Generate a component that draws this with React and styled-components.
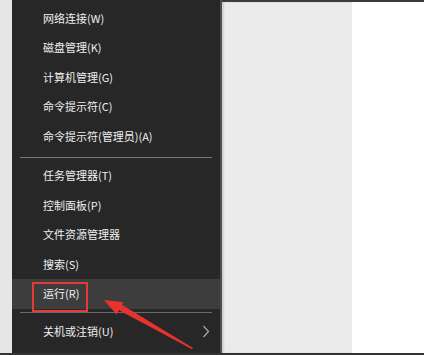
import React from "react";
import styled, { createGlobalStyle } from "styled-components";

const Global = createGlobalStyle`
  html, body {
    margin: 0;
    padding: 0;
    overflow: hidden;
    background: #ffffff;
  }
`;

const Screen = styled.div`
  position: relative;
  width: 424px;
  height: 355px;
  display: flex;
  flex-direction: column;
  font-family: "Noto Sans CJK SC", "Microsoft YaHei", sans-serif;
`;

const Body = styled.div`
  flex: 1;
  display: flex;
  min-height: 0;
`;

const BottomBar = styled.div`
  height: 2px;
  background: #333333;
`;

const LeftStrip = styled.div`
  width: 12px;
  background: #e6e6e6;
`;

const Menu = styled.div`
  width: 208px;
  background: #272727;
  border-right: 2px solid #4d4d4d;
  padding-top: 3.5px;
  box-sizing: content-box;
  display: flex;
  flex-direction: column;
`;

const Desktop = styled.div`
  flex: 1;
  display: flex;
  border-top: 2px solid #3c3c3c;
`;

const Panel = styled.div`
  width: 130px;
  background: #ebebeb;
  box-shadow: inset 2px 0 2px rgba(0, 0, 0, 0.12);
`;

const Blank = styled.div`
  flex: 1;
  background: #ffffff;
`;

const Row = styled.div`
  position: relative;
  height: ${(p) => (p.$tall ? "30px" : "29.5px")};
  display: flex;
  align-items: center;
  justify-content: space-between;
  padding: 0 10px 0 31px;
  background: ${(p) => (p.$active ? "#3d3d3d" : "transparent")};
  color: #f0f0f0;
  font-size: 11px;
`;

const Label = styled.span`
  line-height: 1;
`;

const Marker = styled.span`
  position: absolute;
  left: 20px;
  top: 3px;
  width: 52px;
  height: 26px;
  border: 2px solid #e53a35;
`;

const Separator = styled.div`
  height: 1px;
  margin: ${(p) => p.$m};
  background: ${(p) => p.$c};
`;

const Chevron = () => (
  <svg width="8" height="13" viewBox="0 0 8 13">
    <polyline points="1.5,1 6.5,6.5 1.5,12" fill="none" stroke="#a8a8a8" strokeWidth="1.2" />
  </svg>
);

const Overlay = styled.svg`
  position: absolute;
  left: 0;
  top: 0;
  pointer-events: none;
`;

const top = ["网络连接(W)", "磁盘管理(K)", "计算机管理(G)", "命令提示符(C)", "命令提示符(管理员)(A)"];
const middle = ["任务管理器(T)", "控制面板(P)", "文件资源管理器", "搜索(S)"];

export default function App() {
  return (
    <Screen>
      <Global />
      <Body>
        <LeftStrip />
        <Menu>
          {top.map((t) => (
            <Row key={t}>
              <Label>{t}</Label>
            </Row>
          ))}
          <Separator $m="5.5px 8px 3.5px 8px" $c="#7a7a7a" />
          {middle.map((t) => (
            <Row key={t}>
              <Label>{t}</Label>
            </Row>
          ))}
          <Row $active>
            <Label>运行(R)</Label>
            <Marker />
          </Row>
          <Separator $m="3px 8px 3.5px 8px" $c="#6a6a6a" />
          <Row $tall>
            <Label>关机或注销(U)</Label>
            <Chevron />
          </Row>
        </Menu>
        <Desktop>
          <Panel />
          <Blank />
        </Desktop>
      </Body>
      <BottomBar />
      <Overlay width="424" height="355" viewBox="0 0 424 355">
        <polygon points="193,348 192.2,349.2 118.5,310 121.5,304.5" fill="#e8322e" />
        <polygon points="104,300 123.5,302.2 116.5,314.5" fill="#e8322e" />
      </Overlay>
    </Screen>
  );
}
